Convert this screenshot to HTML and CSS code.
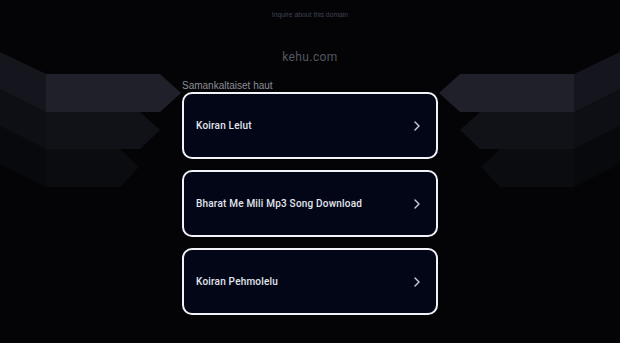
FILE: index.html
```html
<!DOCTYPE html>
<html lang="fi">
<head>
    <meta charset="UTF-8">
    <meta name="viewport" content="width=device-width, initial-scale=1.0">
    <title>kehu.com</title>
    <link rel="stylesheet" href="styles.css">
</head>
<body>
    <svg class="backdrop" width="620" height="343" viewBox="0 0 620 343" aria-hidden="true">
        <g>
            <polygon points="0,126 46,149 46,187 0,164" fill="#08090c"/>
            <polygon points="0,89 46,112 46,149 0,126" fill="#0e0f14"/>
            <polygon points="0,52 46,74 46,112 0,89" fill="#15161d"/>
            <polygon points="46,149 120,149 139,167 120,187 46,187" fill="#0b0c10"/>
            <polygon points="46,112 140,112 160,130 140,149 46,149" fill="#111218"/>
            <polygon points="46,74 160,74 181,93 160,112 46,112" fill="#1f2029"/>
        </g>
        <g transform="translate(620 0) scale(-1 1)">
            <polygon points="0,126 46,149 46,187 0,164" fill="#08090c"/>
            <polygon points="0,89 46,112 46,149 0,126" fill="#0e0f14"/>
            <polygon points="0,52 46,74 46,112 0,89" fill="#15161d"/>
            <polygon points="46,149 120,149 139,167 120,187 46,187" fill="#0b0c10"/>
            <polygon points="46,112 140,112 160,130 140,149 46,149" fill="#111218"/>
            <polygon points="46,74 160,74 181,93 160,112 46,112" fill="#1f2029"/>
        </g>
    </svg>

    <div class="page">
        <a class="inquire" href="#">Inquire about this domain</a>
        <div class="domain">kehu.com</div>

        <div class="results">
            <div class="results-title">Samankaltaiset haut</div>
            <a class="result" href="#">
                <span>Koiran Lelut</span>
                <svg class="chevron" width="6" height="10" viewBox="0 0 6 10"><path d="M1 1l4 4-4 4" fill="none" stroke="#cbd0dc" stroke-width="1.4" stroke-linecap="round" stroke-linejoin="round"/></svg>
            </a>
            <a class="result" href="#">
                <span>Bharat Me Mili Mp3 Song Download</span>
                <svg class="chevron" width="6" height="10" viewBox="0 0 6 10"><path d="M1 1l4 4-4 4" fill="none" stroke="#cbd0dc" stroke-width="1.4" stroke-linecap="round" stroke-linejoin="round"/></svg>
            </a>
            <a class="result" href="#">
                <span>Koiran Pehmolelu</span>
                <svg class="chevron" width="6" height="10" viewBox="0 0 6 10"><path d="M1 1l4 4-4 4" fill="none" stroke="#cbd0dc" stroke-width="1.4" stroke-linecap="round" stroke-linejoin="round"/></svg>
            </a>
        </div>
    </div>
</body>
</html>
```

FILE: styles.css
```css
body {
    margin: 0;
    min-height: 100vh;
    background-color: #040407;
    font-family: "Liberation Sans", Arial, sans-serif;
    overflow: hidden;
}

.backdrop {
    position: absolute;
    top: 0;
    left: 0;
    z-index: 0;
}

.page {
    position: relative;
    z-index: 1;
    display: flex;
    flex-direction: column;
    align-items: center;
    padding-top: 10px;
}

.inquire {
    font-size: 6.8px;
    line-height: 10px;
    color: #3f4352;
    text-decoration: none;
}

.domain {
    margin-top: 30px;
    font-family: Roboto, "Liberation Sans", sans-serif;
    font-size: 12px;
    line-height: 14px;
    letter-spacing: 0.4px;
    color: #55575f;
}

.results {
    width: 256px;
    margin-top: 16px;
    display: flex;
    flex-direction: column;
    gap: 11px;
}

.results-title {
    font-size: 10px;
    line-height: 12px;
    color: #8b8d95;
    margin-bottom: -11px;
}

.result {
    box-sizing: border-box;
    height: 67px;
    display: flex;
    align-items: center;
    justify-content: space-between;
    padding: 0 16px 0 12px;
    background-color: #020617;
    border: 2px solid #f1f3f8;
    border-radius: 10px;
    color: #e2e6ee;
    font-family: Roboto, "Liberation Sans", sans-serif;
    font-size: 10px;
    font-weight: 500;
    letter-spacing: 0.2px;
    text-decoration: none;
}

.chevron {
    display: block;
}
```
